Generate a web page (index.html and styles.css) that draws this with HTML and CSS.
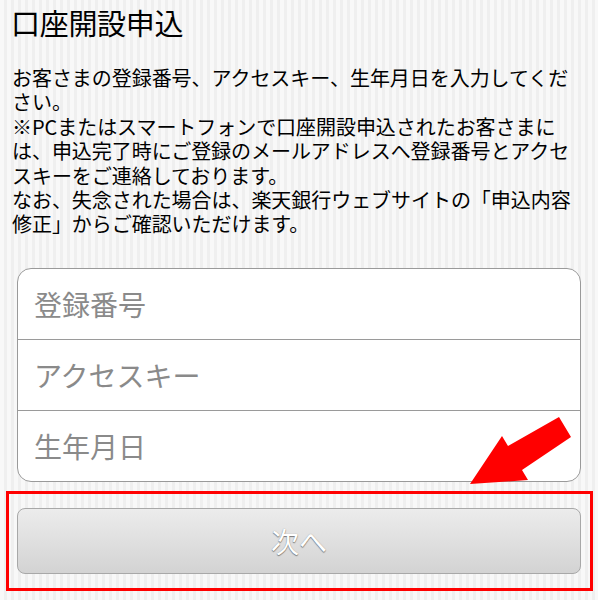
FILE: index.html
```html
<!DOCTYPE html>
<html lang="ja">
<head>
<meta charset="utf-8">
<title>口座開設申込</title>
<link rel="stylesheet" href="styles.css">
</head>
<body>
<div class="page">
  <h1 class="title">口座開設申込</h1>
  <p class="intro">お客さまの登録番号、アクセスキー、生年月日を入力してください。<br>※PCまたはスマートフォンで口座開設申込されたお客さまには、申込完了時にご登録のメールアドレスへ登録番号とアクセスキーをご連絡しております。<br>なお、失念された場合は、楽天銀行ウェブサイトの「申込内容修正」からご確認いただけます。</p>
  <div class="form">
    <div class="row"><input class="field" type="text" placeholder="登録番号"></div>
    <div class="row"><input class="field" type="text" placeholder="アクセスキー"></div>
    <div class="row"><input class="field" type="text" placeholder="生年月日"></div>
  </div>
  <div class="highlight">
    <button class="next" type="button">次へ</button>
  </div>
  <svg class="arrow" width="598" height="600" viewBox="0 0 598 600">
    <polygon points="470,484 502,436 508,446 559,417 571,437 522,470 528,480" fill="#ff0000"/>
  </svg>
</div>
</body>
</html>
```

FILE: styles.css
```css
html, body {
  margin: 0;
  padding: 0;
}
body {
  width: 598px;
  height: 600px;
  overflow: hidden;
  background: repeating-linear-gradient(90deg, #f8f8f8 0, #f8f8f8 4px, #efefef 4px, #efefef 7px);
  font-family: "Noto Sans CJK JP", "Noto Sans", sans-serif;
  color: #000;
}
.page {
  position: relative;
}
.title {
  margin: 0;
  padding: 3px 0 0 11px;
  font-size: 29px;
  font-weight: normal;
  line-height: 39px;
  letter-spacing: -0.3px;
}
.intro {
  margin: 24px 0 0 0;
  padding: 0 10px 0 12px;
  font-size: 20px;
  line-height: 24.4px;
  letter-spacing: -0.05px;
}
.form {
  margin: 31px 17px 0 17px;
  background: #fff;
  border: 1px solid #9a9a9a;
  border-radius: 14px;
  overflow: hidden;
}
.row {
  height: 70px;
  display: flex;
  align-items: center;
}
.row + .row {
  border-top: 1px solid #9a9a9a;
}
.field {
  border: 0;
  outline: none;
  background: transparent;
  width: 100%;
  padding: 0 0 0 16px;
  font-family: "Noto Sans CJK JP", "Noto Sans", sans-serif;
  font-size: 28px;
  color: #333;
}
.field::placeholder {
  color: #8a8a8a;
}
.highlight {
  margin: 9px 5px 0 6px;
  border: 3px solid #ff0000;
  padding: 14px 9px 14px 8px;
}
.next {
  display: block;
  width: 100%;
  height: 66px;
  border: 1px solid #a8a8a8;
  border-radius: 8px;
  background: linear-gradient(#ececec, #d3d3d3);
  font-family: "Noto Sans CJK JP", "Noto Sans", sans-serif;
  font-size: 28px;
  color: #ffffff;
  text-shadow: 0 1px 1px #777, 0 0 1px #999;
  padding: 0;
}
.arrow {
  position: absolute;
  left: 0;
  top: 0;
  pointer-events: none;
}
```
